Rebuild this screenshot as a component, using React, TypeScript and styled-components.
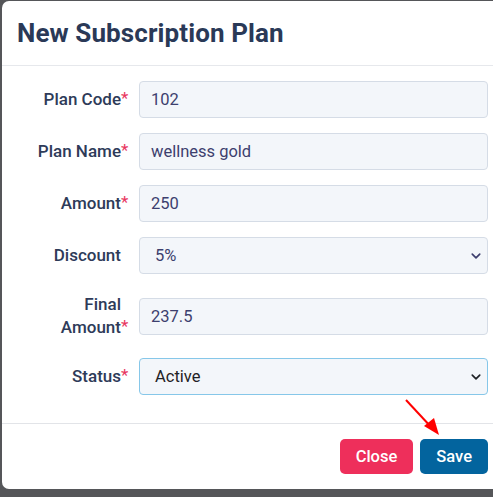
import React from 'react';
import styled, { createGlobalStyle } from 'styled-components';

const GlobalStyle = createGlobalStyle`
  html, body {
    margin: 0;
    padding: 0;
    background: #555659;
    overflow: hidden;
  }
  body {
    font-family: Roboto, "Noto Sans", sans-serif;
  }
`;

type Field = {
  label: string;
  required?: boolean;
  value: string;
  kind: 'input' | 'select';
  focused?: boolean;
};

const fields: Field[] = [
  { label: 'Plan Code', required: true, value: '102', kind: 'input' },
  { label: 'Plan Name', required: true, value: 'wellness gold', kind: 'input' },
  { label: 'Amount', required: true, value: '250', kind: 'input' },
  { label: 'Discount', value: '5%', kind: 'select' },
  { label: 'Final Amount', required: true, value: '237.5', kind: 'input' },
  { label: 'Status', required: true, value: 'Active', kind: 'select', focused: true },
];

function Chevron({ dark }: { dark?: boolean }) {
  return (
    <ChevronIcon viewBox="0 0 16 16" aria-hidden>
      <path
        d="M3 5.5l5 5 5-5"
        fill="none"
        stroke={dark ? '#1f2226' : '#3d3f6e'}
        strokeWidth="2.2"
        strokeLinecap="round"
        strokeLinejoin="round"
      />
    </ChevronIcon>
  );
}

function App() {
  return (
    <>
      <GlobalStyle />
      <Backdrop>
        <Modal>
          <Header>
            <Title>New Subscription Plan</Title>
          </Header>
          <Body>
            {fields.map((f) => (
              <Row key={f.label}>
                <Label>
                  {f.label}
                  {f.required && <Star>*</Star>}
                </Label>
                {f.kind === 'input' ? (
                  <Control>{f.value}</Control>
                ) : (
                  <SelectBox $focused={f.focused}>
                    <SelectText $dark={f.focused}>{f.value}</SelectText>
                    <Chevron dark={f.focused} />
                  </SelectBox>
                )}
              </Row>
            ))}
          </Body>
          <Footer>
            <Button $variant="close">Close</Button>
            <Button $variant="save">Save</Button>
            <Arrow viewBox="0 0 40 40" aria-hidden>
              <line x1="2" y1="2" x2="28" y2="30" stroke="#ff0000" strokeWidth="2" />
              <polygon points="35,37 20,28 30,20" fill="#ff0000" />
            </Arrow>
          </Footer>
        </Modal>
      </Backdrop>
    </>
  );
}

const Backdrop = styled.div`
  width: 493px;
  height: 497px;
  padding: 1px 0 0 2px;
  box-sizing: border-box;
`;

const Modal = styled.div`
  position: relative;
  width: 502px;
  background: #ffffff;
  border-radius: 7px;
  display: flex;
  flex-direction: column;
`;

const Header = styled.div`
  height: 64px;
  display: flex;
  align-items: center;
  padding: 0 15px;
  border-bottom: 1px solid #e6e8ec;
`;

const Title = styled.h1`
  margin: 0;
  font-size: 26px;
  font-weight: 700;
  color: #2a3957;
  letter-spacing: 0.1px;
`;

const Body = styled.div`
  padding: 15px 16px 28px 15px;
  display: flex;
  flex-direction: column;
  gap: 15px;
  border-bottom: 1px solid #e2e4e8;
`;

const Row = styled.div`
  display: flex;
  align-items: center;
  min-height: 37px;
`;

const Label = styled.div`
  width: 92px;
  margin-left: 12px;
  margin-right: 18px;
  padding: 4px 0;
  text-align: right;
  font-size: 17px;
  font-weight: 500;
  line-height: 23px;
  color: #2e3b59;
`;

const Star = styled.span`
  display: inline-block;
  width: 9px;
  margin-right: -9px;
  color: #e8365f;
  font-weight: 400;
  text-align: left;
  vertical-align: top;
  line-height: 20px;
`;

const Control = styled.div`
  flex: 1;
  height: 37px;
  box-sizing: border-box;
  display: flex;
  align-items: center;
  padding: 0 11px;
  background: #f3f6fa;
  border: 1px solid #d5dce6;
  border-radius: 4px;
  font-size: 16.5px;
  color: #3d3f6e;
`;

const SelectBox = styled.div<{ $focused?: boolean }>`
  flex: 1;
  height: 37px;
  box-sizing: border-box;
  display: flex;
  align-items: center;
  justify-content: space-between;
  padding: 0 5px 0 15px;
  background: #f3f6fa;
  border: 1px solid ${(p) => (p.$focused ? '#86c7e9' : '#d5dce6')};
  border-radius: 4px;
  font-size: 16.5px;
`;

const SelectText = styled.span<{ $dark?: boolean }>`
  color: ${(p) => (p.$dark ? '#1f2226' : '#3d3f6e')};
`;

const ChevronIcon = styled.svg`
  width: 12px;
  height: 12px;
`;

const Footer = styled.div`
  position: relative;
  display: flex;
  justify-content: flex-end;
  gap: 7px;
  padding: 15px 16px 15px 15px;
`;

const Button = styled.button<{ $variant: 'close' | 'save' }>`
  height: 35px;
  padding: 0 16px;
  border: none;
  border-radius: 5px;
  font-family: Roboto, "Noto Sans", sans-serif;
  font-size: 16.5px;
  font-weight: 500;
  color: #ffffff;
  background: ${(p) => (p.$variant === 'close' ? '#ee2f5b' : '#03649e')};
`;

const Arrow = styled.svg`
  position: absolute;
  left: 402px;
  top: -26px;
  width: 40px;
  height: 40px;
`;

export default App;
